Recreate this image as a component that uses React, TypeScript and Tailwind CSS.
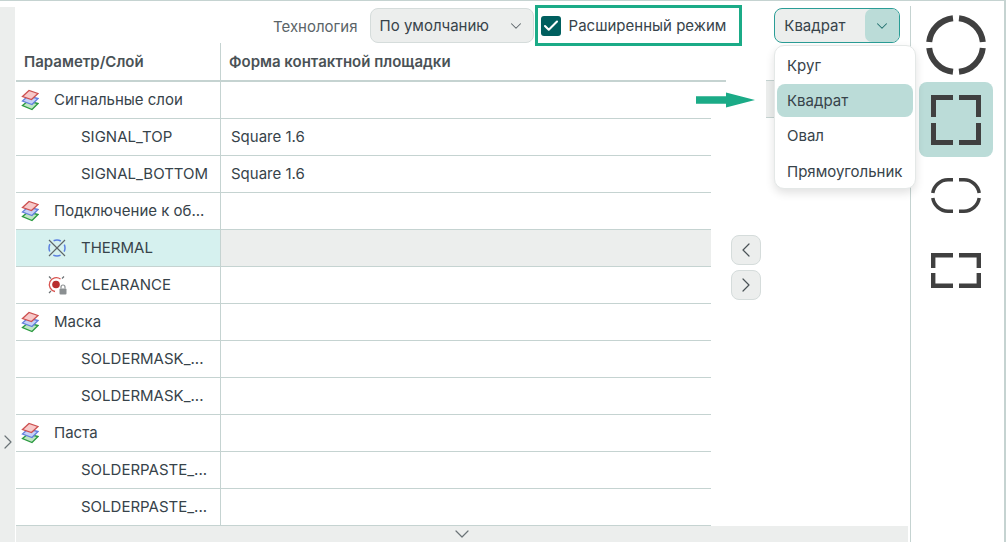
import { Check, ChevronDown, ChevronLeft, ChevronRight } from "lucide-react";

type Row = {
	name: string;
	icon?: "layers" | "thermal" | "clearance";
	value?: string;
	level: 0 | 1;
	active?: boolean;
};

const rows: Row[] = [
	{ name: "Сигнальные слои", icon: "layers", level: 0 },
	{ name: "SIGNAL_TOP", value: "Square 1.6", level: 1 },
	{ name: "SIGNAL_BOTTOM", value: "Square 1.6", level: 1 },
	{ name: "Подключение к об...", icon: "layers", level: 0 },
	{ name: "THERMAL", icon: "thermal", level: 1, active: true },
	{ name: "CLEARANCE", icon: "clearance", level: 1 },
	{ name: "Маска", icon: "layers", level: 0 },
	{ name: "SOLDERMASK_...", level: 1 },
	{ name: "SOLDERMASK_...", level: 1 },
	{ name: "Паста", icon: "layers", level: 0 },
	{ name: "SOLDERPASTE_...", level: 1 },
	{ name: "SOLDERPASTE_...", level: 1 },
];

function LayersIcon() {
	return (
		<svg width="18" height="22" viewBox="0 0 18 22" className="block">
			<path d="M1.5 16.5 L7 12 L17 14.5 L11 20.5 Z" fill="#bfe6c4" stroke="#2b9a40" strokeWidth="1.3" />
			<path d="M1.5 12 L7 7 L17 9.5 L11 15.5 Z" fill="#c6d1f7" stroke="#6480dd" strokeWidth="1.3" />
			<path d="M1.5 7.5 L8 1.5 L17 4.5 L10.5 10.5 Z" fill="#f8c9c9" stroke="#cc5050" strokeWidth="1.3" />
		</svg>
	);
}

function ThermalIcon() {
	return (
		<svg width="20" height="20" viewBox="0 0 20 20" className="block">
			<circle cx="10" cy="10" r="8" fill="none" stroke="#5b80e0" strokeWidth="1.5" strokeDasharray="7.5 5.07" strokeDashoffset="3.75" />
			<path d="M2 2 L18 18 M18 2 L2 18" stroke="#5f6668" strokeWidth="1.2" />
		</svg>
	);
}

function ClearanceIcon() {
	return (
		<svg width="20" height="20" viewBox="0 0 20 20" className="block">
			<path d="M13.5 4 A7 7 0 1 0 8 16.5" fill="none" stroke="#d9534f" strokeWidth="1.3" />
			<circle cx="9" cy="9.5" r="3.8" fill="#b92f2f" />
			<path d="M2 1.5 L4 3.5 M17 1.5 L15 3.5 M2 18 L4 16" stroke="#6a7073" strokeWidth="1.2" />
			<rect x="12.5" y="13.5" width="7" height="6" rx="1" fill="#8a8f91" />
			<path d="M14 13.5 V12 A2 2 0 0 1 18 12 V13.5" fill="none" stroke="#8a8f91" strokeWidth="1.2" />
		</svg>
	);
}

function RowIcon({ icon }: { icon?: Row["icon"] }) {
	if (icon === "layers") return <LayersIcon />;
	if (icon === "thermal") return <ThermalIcon />;
	if (icon === "clearance") return <ClearanceIcon />;
	return null;
}

function TableRow({ row }: { row: Row }) {
	return (
		<div className="flex h-[37px] border-b border-[#c5d3d1] text-[15px] text-[#37434a]">
			<div
				className={`relative flex w-[205px] shrink-0 items-center whitespace-nowrap border-r border-[#c5d3d1] ${
					row.active ? "bg-[#d6f1ef]" : ""
				} ${row.level === 0 ? "pl-[38px]" : "pl-[65px]"}`}
			>
				{row.icon && (
					<span className={`absolute ${row.level === 0 ? "left-[5px] top-[7px]" : "left-[31px] top-[8px]"}`}>
						<RowIcon icon={row.icon} />
					</span>
				)}
				{row.name}
			</div>
			<div className={`flex flex-1 items-center pl-[10px] ${row.active ? "bg-[#eceeed]" : ""}`}>
				{row.value}
			</div>
		</div>
	);
}

function ShapeCircle() {
	return (
		<svg width="60" height="60" viewBox="0 0 60 60" className="block">
			<g fill="none" stroke="#404040" strokeWidth="6">
				<path d="M27 3.2 A27 27 0 0 0 3.2 27" />
				<path d="M33 3.2 A27 27 0 0 1 56.8 27" />
				<path d="M3.2 33 A27 27 0 0 0 27 56.8" />
				<path d="M56.8 33 A27 27 0 0 1 33 56.8" />
			</g>
		</svg>
	);
}

function ShapeSquare() {
	return (
		<svg width="50" height="50" viewBox="0 0 50 50" className="block">
			<path
				d="M22 2.5 H2.5 V22 M28 2.5 H47.5 V22 M2.5 28 V47.5 H22 M47.5 28 V47.5 H28"
				fill="none"
				stroke="#404040"
				strokeWidth="5"
			/>
		</svg>
	);
}

function ShapeOval() {
	return (
		<svg width="50" height="35" viewBox="0 0 50 35" className="block">
			<path
				d="M22 1.8 H17 A15.5 15.5 0 0 0 1.8 15 M28 1.8 H33 A15.5 15.5 0 0 1 48.2 15 M1.8 20 A15.5 15.5 0 0 0 17 33.2 H22 M48.2 20 A15.5 15.5 0 0 1 33 33.2 H28"
				fill="none"
				stroke="#404040"
				strokeWidth="3.5"
			/>
		</svg>
	);
}

function ShapeRect() {
	return (
		<svg width="50" height="35" viewBox="0 0 50 35" className="block">
			<path
				d="M22 2.2 H2.2 V15 M28 2.2 H47.8 V15 M2.2 20 V32.8 H22 M47.8 20 V32.8 H28"
				fill="none"
				stroke="#404040"
				strokeWidth="4.4"
			/>
		</svg>
	);
}

export default function App() {
	return (
		<div className="relative flex h-[542px] w-[1006px] overflow-hidden border-t border-r-2 border-[#c5d3d1] bg-white font-['Inter',sans-serif]">
			{/* left collapse strip */}
			<div className="mt-[6px] flex w-[15px] shrink-0 flex-col items-center bg-[#eceeed] pt-[423px]">
				<ChevronRight size={24} strokeWidth={1.2} className="shrink-0 text-[#6b7377]" />
			</div>

			<div className="flex w-[893px] shrink-0 flex-col pl-px">
				{/* toolbar */}
				<div className="flex h-[42px] shrink-0 items-start pl-[257px] pt-[7px] text-[15px] text-[#37434a]">
					<span className="mr-[12px] mt-[8px] text-[#5b6468]">Технология</span>
					<div className="flex h-[35px] w-[164px] items-center justify-between rounded-lg border border-[#d5dcdb] bg-[#eceeed] pl-[9px] pr-[8px]">
						<span className="pt-px">По умолчанию</span>
						<ChevronDown size={18} strokeWidth={1.4} className="text-[#5b6468]" />
					</div>
					<div className="relative ml-[7px] flex h-[35px] items-center">
						<span className="flex h-5 w-5 items-center justify-center rounded-[3px] bg-[#005f5f]">
							<Check size={18} strokeWidth={2.8} className="text-white" />
						</span>
						<span className="ml-2 pt-px">Расширенный режим</span>
						<span className="absolute left-[-6px] top-[-3px] h-[41px] w-[207px] border-[3px] border-[#1bab87]" />
					</div>
					<div className="ml-[48px] flex h-[35px] w-[126px] items-center justify-between rounded-lg border border-[#2a9d96] bg-[#eceeed] pl-[9px]">
						<span className="pt-px">Квадрат</span>
						<span className="flex h-full w-[34px] items-center justify-center rounded-[7px] bg-[#bbdcd8]">
							<ChevronDown size={18} strokeWidth={1.4} className="text-[#1f6f6c]" />
						</span>
					</div>
				</div>

				{/* table and transfer buttons */}
				<div className="flex flex-1">
					<div className="w-[710px] shrink-0">
						<div className="flex h-[39px] border-b-2 border-[#c5d3d1] text-[15px] font-semibold text-[#4a5256]">
							<div className="flex w-[205px] items-center border-r border-[#c5d3d1] pl-[8px] pt-[2px]">Параметр/Слой</div>
							<div className="flex flex-1 items-center pl-2 pt-[2px]">Форма контактной площадки</div>
						</div>
						<div className="w-[695px]">
							{rows.map((row, i) => (
								<TableRow key={i} row={row} />
							))}
						</div>
					</div>
					<div className="flex flex-col gap-[5px] pl-[5px] pt-[192px]">
						<button className="flex h-[30px] w-[30px] items-center justify-center rounded-lg border border-[#d5dcdb] bg-[#eceeed] text-[#4a5256]">
							<ChevronLeft size={24} strokeWidth={1.2} />
						</button>
						<button className="flex h-[30px] w-[30px] items-center justify-center rounded-lg border border-[#d5dcdb] bg-[#eceeed] text-[#4a5256]">
							<ChevronRight size={24} strokeWidth={1.2} />
						</button>
					</div>
				</div>

				{/* bottom collapse strip */}
				<div className="flex h-[16px] shrink-0 items-center bg-[#eceeed] pl-[434px]">
					<ChevronDown size={24} strokeWidth={1.2} className="shrink-0 text-[#6b7377]" />
				</div>
			</div>

			{/* shape picker */}
			<div className="ml-[2px] mt-[5px] flex w-[94px] shrink-0 flex-col items-center border-l border-[#c5d3d1] pr-[3px]">
				<div className="mt-[9px] flex h-[60px] items-center justify-center">
					<ShapeCircle />
				</div>
				<div className="mt-[7px] flex h-[75px] w-[74px] items-center justify-center rounded-lg bg-[#bbdcd8]">
					<ShapeSquare />
				</div>
				<div className="mt-[21px]">
					<ShapeOval />
				</div>
				<div className="mt-[40px]">
					<ShapeRect />
				</div>
			</div>

			{/* partly hidden row behind the dropdown */}
			<div className="absolute left-[766px] top-[79px] h-[38px] w-[20px] border-y border-[#c5d3d1] bg-[#eceeed]" />

			{/* open dropdown */}
			<div className="absolute left-[774px] top-[44px] flex h-[144px] w-[142px] flex-col rounded-[10px] border border-[#e4e8e7] bg-white px-[2px] text-[15px] text-[#37434a] shadow-[0_4px_10px_rgba(0,0,0,0.12)]">
				<div className="flex h-[38px] shrink-0 items-center pl-[10px] pt-[2px]">Круг</div>
				<div className="flex h-[33px] shrink-0 items-center rounded-lg bg-[#bbdcd8] pl-[10px] pt-[2px]">Квадрат</div>
				<div className="flex h-[36px] shrink-0 items-center pl-[10px] pt-[2px]">Овал</div>
				<div className="mt-[1px] flex h-[34px] shrink-0 items-center pl-[10px] pt-[2px]">Прямоугольник</div>
			</div>

			{/* annotation arrow */}
			<svg width="60" height="16" viewBox="0 0 60 16" className="absolute left-[696px] top-[91px]">
				<path d="M0 4.2 H30 V0.5 L59 8 L30 15.5 V11.8 H0 Z" fill="#1bab87" />
			</svg>
		</div>
	);
}
